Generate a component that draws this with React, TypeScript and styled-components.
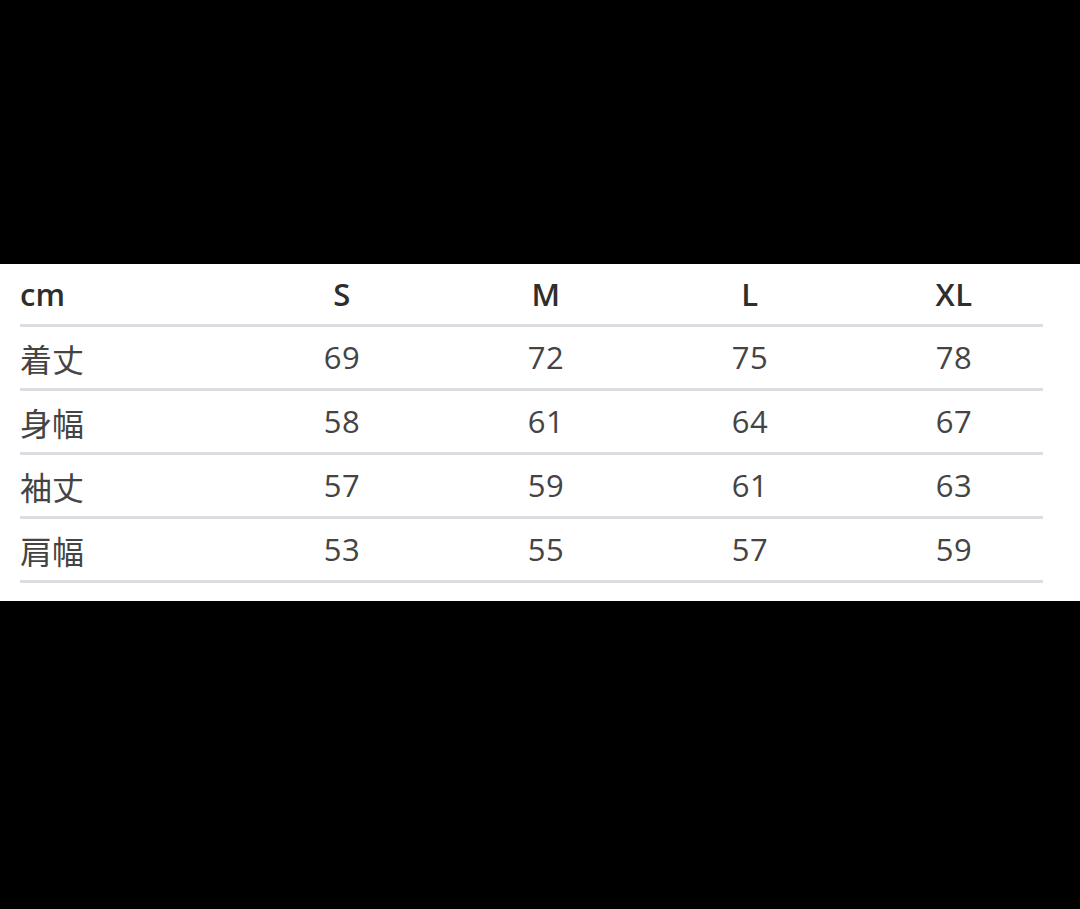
import React from 'react';
import styled, { createGlobalStyle } from 'styled-components';

const sizes = ['S', 'M', 'L', 'XL'];

const rows: { label: string; values: number[] }[] = [
  { label: '着丈', values: [69, 72, 75, 78] },
  { label: '身幅', values: [58, 61, 64, 67] },
  { label: '袖丈', values: [57, 59, 61, 63] },
  { label: '肩幅', values: [53, 55, 57, 59] },
];

const App = () => {
  return (
    <>
      <GlobalStyle />
      <Page>
        <Sheet>
          <Table>
            <Row header>
              <LabelCell header>cm</LabelCell>
              {sizes.map((s) => (
                <ValueCell key={s} header>
                  {s}
                </ValueCell>
              ))}
            </Row>
            {rows.map((row) => (
              <Row key={row.label}>
                <LabelCell>{row.label}</LabelCell>
                {row.values.map((v, i) => (
                  <ValueCell key={i}>{v}</ValueCell>
                ))}
              </Row>
            ))}
          </Table>
        </Sheet>
      </Page>
    </>
  );
};

export default App;

const GlobalStyle = createGlobalStyle`
  html, body {
    margin: 0;
    padding: 0;
    background: #000;
  }
  body {
    font-family: 'Open Sans', 'Noto Sans CJK JP', sans-serif;
  }
`;

const Page = styled.div`
  width: 1080px;
  height: 909px;
  background: #000;
  padding-top: 264px;
  box-sizing: border-box;
  overflow: hidden;
`;

const Sheet = styled.div`
  background: #fff;
  padding: 0 0 18px 20px;
`;

const Table = styled.div`
  width: 1023px;
  display: flex;
  flex-direction: column;
`;

const Row = styled.div<{ header?: boolean }>`
  display: grid;
  grid-template-columns: 220px repeat(4, 204px);
  align-items: center;
  height: ${(p) => (p.header ? '60px' : '61px')};
  border-bottom: 3px solid #dcdde3;
`;

const LabelCell = styled.div<{ header?: boolean }>`
  font-family: ${(p) =>
    p.header ? "'Open Sans', sans-serif" : "'Noto Sans CJK JP', sans-serif"};
  font-size: ${(p) => (p.header ? '31px' : '32px')};
  font-weight: ${(p) => (p.header ? 600 : 400)};
  color: ${(p) => (p.header ? '#2e2e2e' : '#444')};
  line-height: 1;
`;

const ValueCell = styled.div<{ header?: boolean }>`
  text-align: center;
  font-family: 'Open Sans', sans-serif;
  font-size: 31px;
  font-weight: ${(p) => (p.header ? 600 : 400)};
  color: ${(p) => (p.header ? '#2e2e2e' : '#444')};
  line-height: 1;
  letter-spacing: 0.5px;
`;
